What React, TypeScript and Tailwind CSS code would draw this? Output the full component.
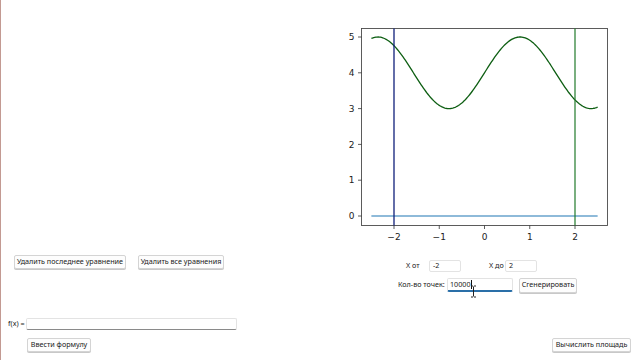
import React from "react";

const OX = 330;
const X = (x: number) => 484.5 + 45.25 * x - OX;
const Y = (y: number) => 216 - 35.8 * y;

function curvePath() {
  const pts: string[] = [];
  for (let i = 0; i <= 200; i++) {
    const x = -2.5 + (5 * i) / 200;
    const y = 4 + Math.sin(2 * x);
    pts.push(`${i === 0 ? "M" : "L"}${X(x).toFixed(2)},${Y(y).toFixed(2)}`);
  }
  return pts.join(" ");
}

function Chart() {
  const xt = [-2, -1, 0, 1, 2];
  const yt = [0, 1, 2, 3, 4, 5];
  return (
    <svg width={310} height={250} viewBox="0 0 310 250" className="block">
      <rect x={31.5} y={28.5} width={246} height={197} fill="white" stroke="#4a4a4a" strokeWidth={0.9} />
      {yt.map((v) => (
        <g key={v}>
          <line x1={28} x2={31.5} y1={Y(v)} y2={Y(v)} stroke="#333" strokeWidth={0.8} />
          <text x={24.5} y={Y(v) + 3.2} textAnchor="end" fontSize={9} fill="#222" fontFamily="'DejaVu Sans', sans-serif">
            {v}
          </text>
        </g>
      ))}
      {xt.map((v) => (
        <g key={v}>
          <line x1={X(v)} x2={X(v)} y1={225.5} y2={229} stroke="#333" strokeWidth={0.8} />
          <text x={X(v)} y={239.5} textAnchor="middle" fontSize={9} fill="#222" fontFamily="'DejaVu Sans', sans-serif">
            {v < 0 ? `\u2212${Math.abs(v)}` : v}
          </text>
        </g>
      ))}
      <line x1={X(-2.5)} x2={X(2.5)} y1={Y(0)} y2={Y(0)} stroke="#1f77b4" strokeWidth={1.2} />
      <path d={curvePath()} fill="none" stroke="#0d5e12" strokeWidth={1.3} />
      <line x1={X(-2)} x2={X(-2)} y1={28.5} y2={225.5} stroke="#10207a" strokeWidth={1.3} />
      <line x1={X(2)} x2={X(2)} y1={28.5} y2={225.5} stroke="#217a2a" strokeWidth={1.2} />
    </svg>
  );
}

const btn =
  "flex items-center justify-center bg-[#fdfdfd] border border-[#d4d4d4] rounded-[2px] text-[7.2px] text-[#1a1a1a] leading-none shadow-[0_1px_0_#c8c8c8] whitespace-nowrap";
const inp =
  "bg-white border border-[#e3e3e3] border-b-[#8a8a8a] rounded-[2px] text-[7.2px] text-[#1a1a1a] leading-none px-[3px] flex items-center";

export default function App() {
  return (
    <div
      className="relative w-[640px] h-[360px] bg-white border-l border-[#c39a92] flex overflow-hidden"
      style={{ fontFamily: "'Noto Sans', 'Open Sans', sans-serif" }}
    >
      <div className="w-[329px] flex flex-col pl-[7px] pt-[255px]">
        <div className="flex ml-[6px] gap-[12px]">
          <div className={`${btn} w-[112px] h-[14px]`}>Удалить последнее уравнение</div>
          <div className={`${btn} w-[86px] h-[14px]`}>Удалить все уравнения</div>
        </div>
        <div className="flex items-center mt-[49px] h-[12px]">
          <span className="w-[18px] text-[7.2px] text-[#1a1a1a] leading-none whitespace-nowrap">f(x) =</span>
          <div className={`${inp} w-[211px] h-[12px]`}></div>
        </div>
        <div className={`${btn} w-[64px] h-[14px] ml-[19px] mt-[8px]`}>Ввести формулу</div>
      </div>
      <div className="flex-1 flex flex-col">
        <Chart />
        <div className="flex items-center h-[12px] mt-[10px] ml-[76px] text-[7.2px] text-[#1a1a1a] leading-none">
          <span className="w-[23px] whitespace-nowrap">X от</span>
          <div className={`${inp} w-[32px] h-[12px] border-b-[#e3e3e3]`}>-2</div>
          <span className="w-[16px] ml-[28px] whitespace-nowrap">X до</span>
          <div className={`${inp} w-[32px] h-[12px] border-b-[#e3e3e3]`}>2</div>
        </div>
        <div className="flex items-center h-[16px] mt-[5px] ml-[68px] text-[7.2px] text-[#1a1a1a] leading-none">
          <span className="w-[49px] whitespace-nowrap">Кол-во точек:</span>
          <div className="relative w-[66px] h-[14px] bg-white border border-[#e3e3e3] border-b-2 border-b-[#2a6fa8] rounded-[2px] px-[2px] flex items-center">
            <span>10000</span>
            <span className="w-px h-[9px] bg-[#111]"></span>
          </div>
          <div className={`${btn} w-[58px] h-[15px] ml-[6px]`}>Сгенерировать</div>
        </div>
        <div className="mt-auto flex justify-end pr-[9px] pb-[8px]">
          <div className={`${btn} w-[79px] h-[14px]`}>Вычислить площадь</div>
        </div>
      </div>
      <svg className="absolute left-[469px] top-[285px]" width={7} height={13} viewBox="0 0 7 13">
        <path d="M1 1 H3 M4 1 H6 M3.5 1.5 V11.5 M1 12 H3 M4 12 H6" stroke="#222" strokeWidth={1} fill="none" />
      </svg>
    </div>
  );
}
